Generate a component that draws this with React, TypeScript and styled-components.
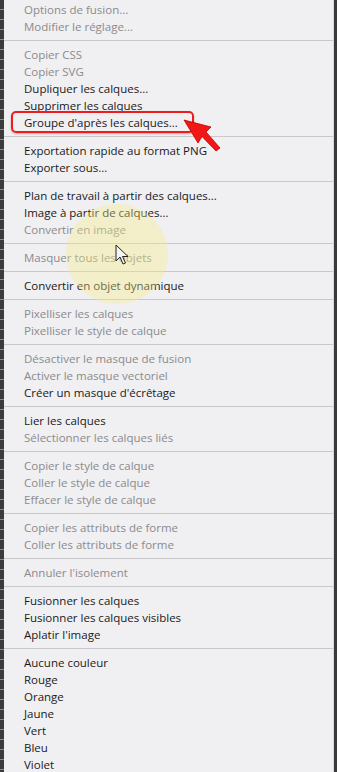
import React from 'react';
import styled, { createGlobalStyle } from 'styled-components';

type Entry = { label: string; enabled?: boolean; marked?: boolean };

const groups: Entry[][] = [
  [{ label: 'Options de fusion...' }, { label: 'Modifier le réglage...' }],
  [
    { label: 'Copier CSS' },
    { label: 'Copier SVG' },
    { label: 'Dupliquer les calques...', enabled: true },
    { label: 'Supprimer les calques', enabled: true },
    { label: "Groupe d'après les calques...", enabled: true, marked: true },
  ],
  [
    { label: 'Exportation rapide au format PNG', enabled: true },
    { label: 'Exporter sous...', enabled: true },
  ],
  [
    { label: 'Plan de travail à partir des calques...', enabled: true },
    { label: 'Image à partir de calques...', enabled: true },
    { label: 'Convertir en image' },
  ],
  [{ label: 'Masquer tous les objets' }],
  [{ label: 'Convertir en objet dynamique', enabled: true }],
  [{ label: 'Pixelliser les calques' }, { label: 'Pixelliser le style de calque' }],
  [
    { label: 'Désactiver le masque de fusion' },
    { label: 'Activer le masque vectoriel' },
    { label: "Créer un masque d'écrêtage", enabled: true },
  ],
  [{ label: 'Lier les calques', enabled: true }, { label: 'Sélectionner les calques liés' }],
  [
    { label: 'Copier le style de calque' },
    { label: 'Coller le style de calque' },
    { label: 'Effacer le style de calque' },
  ],
  [{ label: 'Copier les attributs de forme' }, { label: 'Coller les attributs de forme' }],
  [{ label: "Annuler l'isolement" }],
  [
    { label: 'Fusionner les calques', enabled: true },
    { label: 'Fusionner les calques visibles', enabled: true },
    { label: "Aplatir l'image", enabled: true },
  ],
  [
    { label: 'Aucune couleur', enabled: true },
    { label: 'Rouge', enabled: true },
    { label: 'Orange', enabled: true },
    { label: 'Jaune', enabled: true },
    { label: 'Vert', enabled: true },
    { label: 'Bleu', enabled: true },
    { label: 'Violet', enabled: true },
  ],
];

const GlobalStyle = createGlobalStyle`
  html, body {
    margin: 0;
    padding: 0;
    height: 772px;
    overflow: hidden;
    background: #2e2e2e;
  }
`;

const Screen = styled.div`
  position: relative;
  display: flex;
  width: 337px;
  height: 772px;
  overflow: hidden;
`;

const LeftEdge = styled.div`
  width: 4px;
  flex-shrink: 0;
  background: repeating-linear-gradient(
    to bottom,
    #3b3b3b 0px,
    #3b3b3b 9px,
    #8a8a8a 9px,
    #8a8a8a 10px
  );
`;

const RightEdge = styled.div`
  width: 3px;
  flex-shrink: 0;
  background: #3a3a3a;
`;

const Menu = styled.div`
  flex: 1;
  display: flex;
  flex-direction: column;
  padding-top: 1px;
  background: #f0eff2;
  border-right: 1px solid #d9d8dc;
  font-family: 'Open Sans', 'DejaVu Sans', sans-serif;
  font-size: 11.5px;
`;

const Separator = styled.div`
  height: 1px;
  margin: 5px 0;
  background: #c9c8cc;
  flex-shrink: 0;
`;

const Item = styled.div<{ $enabled?: boolean; $marked?: boolean }>`
  position: relative;
  height: 17px;
  line-height: 17px;
  padding-left: 20px;
  flex-shrink: 0;
  white-space: nowrap;
  color: ${(p) => (p.$enabled ? '#1a1a1a' : '#8b8b8d')};

  ${(p) =>
    p.$marked &&
    `
    &::before {
      content: '';
      position: absolute;
      left: 7px;
      top: -3px;
      width: 179px;
      height: 18px;
      border: 2px solid #ee1c1c;
      border-radius: 5px;
      box-shadow: 0 1px 2px rgba(120, 0, 0, 0.3);
    }
  `}
`;

const Spotlight = styled.div`
  position: absolute;
  left: 66px;
  top: 204px;
  width: 102px;
  height: 100px;
  border-radius: 50%;
  background: radial-gradient(circle, rgba(246, 238, 130, 0.4) 0%, rgba(246, 238, 130, 0.34) 75%, rgba(246, 238, 130, 0) 100%);
  pointer-events: none;
`;

const Overlay = styled.svg`
  position: absolute;
  pointer-events: none;
`;

const Pointer = () => (
  <Overlay width="14" height="22" viewBox="0 0 14 22" style={{ left: 115, top: 244 }}>
    <path d="M1 1 L1 17 L5 13 L8 20 L10.5 19 L7.5 12.5 L13 12.5 Z" fill="#f4f4f4" stroke="#222" strokeWidth="1" strokeLinejoin="round" />
  </Overlay>
);

// red call-out arrow pointing at the framed item
const RedArrow = () => (
  <Overlay width="44" height="40" viewBox="0 0 44 40" style={{ left: 180, top: 114 }}>
    <path
      d="M4 6 L31 13 L26 18 L40 34 L36 37 L22 22.5 L18 29 Z"
      fill="#f21616"
      stroke="#c40000"
      strokeWidth="0.8"
      strokeLinejoin="round"
    />
  </Overlay>
);

export default function App() {
  return (
    <>
      <GlobalStyle />
      <Screen>
        <LeftEdge />
        <Menu>
          {groups.map((group, gi) => (
            <React.Fragment key={gi}>
              {gi > 0 && <Separator />}
              {group.map((entry) => (
                <Item key={entry.label} $enabled={entry.enabled} $marked={entry.marked}>
                  {entry.label}
                </Item>
              ))}
            </React.Fragment>
          ))}
        </Menu>
        <RightEdge />
        <Spotlight />
        <Pointer />
        <RedArrow />
      </Screen>
    </>
  );
}
